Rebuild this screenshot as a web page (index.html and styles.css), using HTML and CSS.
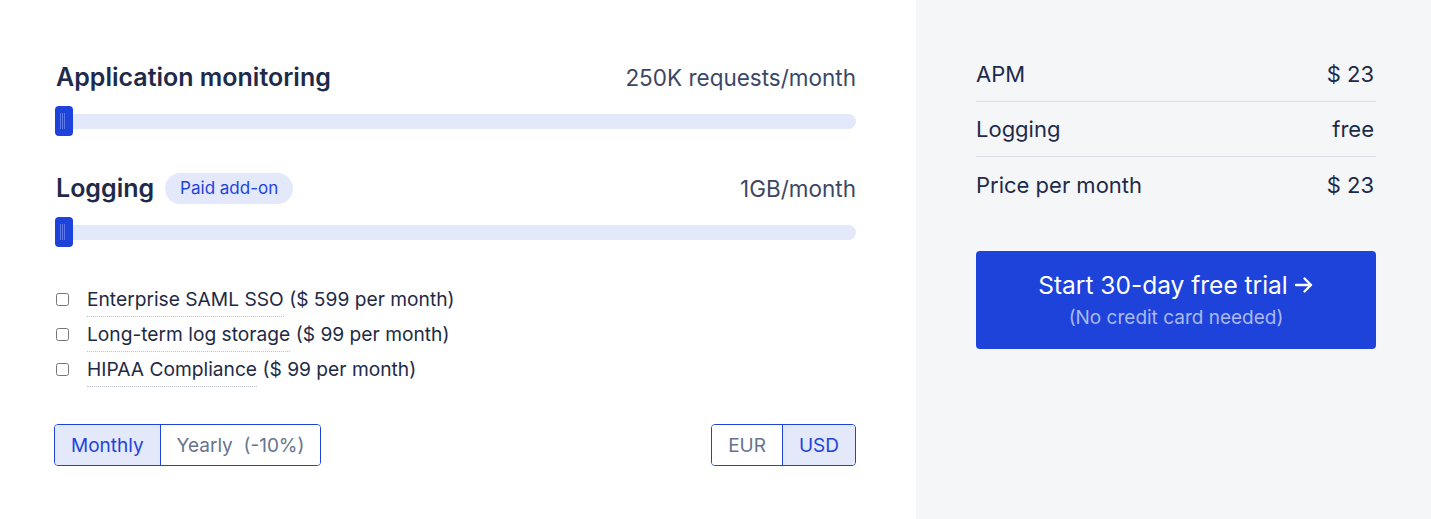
FILE: index.html
```html
<!DOCTYPE html>
<html lang="en">
  <head>
    <meta charset="UTF-8" />
    <meta name="viewport" content="width=device-width, initial-scale=1.0" />
    <title>Pricing calculator</title>
    <link rel="stylesheet" href="styles.css">
  </head>
  <body>
    <div class="config">
      <div class="metric-row">
        <h2 class="metric-title">Application monitoring</h2>
        <span class="metric-value">250K requests/month</span>
      </div>
      <div class="slider">
        <div class="slider-handle"></div>
      </div>

      <div class="metric-row">
        <h2 class="metric-title">
          Logging
          <span class="badge">Paid add-on</span>
        </h2>
        <span class="metric-value">1GB/month</span>
      </div>
      <div class="slider">
        <div class="slider-handle"></div>
      </div>

      <div class="addons">
        <label class="addon">
          <input type="checkbox" />
          <span class="addon-text"><span class="addon-name">Enterprise SAML SSO</span> ($ 599 per month)</span>
        </label>
        <label class="addon">
          <input type="checkbox" />
          <span class="addon-text"><span class="addon-name">Long-term log storage</span> ($ 99 per month)</span>
        </label>
        <label class="addon">
          <input type="checkbox" />
          <span class="addon-text"><span class="addon-name">HIPAA Compliance</span> ($ 99 per month)</span>
        </label>
      </div>

      <div class="toggles">
        <div class="toggle-group">
          <button class="toggle active">Monthly</button>
          <button class="toggle">Yearly&nbsp; (-10%)</button>
        </div>
        <div class="toggle-group">
          <button class="toggle">EUR</button>
          <button class="toggle active">USD</button>
        </div>
      </div>
    </div>

    <div class="summary">
      <div class="summary-row">
        <span>APM</span>
        <span>$ 23</span>
      </div>
      <div class="summary-row">
        <span>Logging</span>
        <span>free</span>
      </div>
      <div class="summary-row">
        <span>Price per month</span>
        <span>$ 23</span>
      </div>
      <a class="trial-button" href="#">
        <span class="trial-main">
          Start 30-day free trial
          <svg class="arrow" width="20" height="18" viewBox="0 0 20 18" fill="none" stroke="currentColor" stroke-width="2.4" stroke-linecap="round" stroke-linejoin="round">
            <path d="M2 9h15M10.5 2.5 17 9l-6.5 6.5" />
          </svg>
        </span>
        <span class="trial-sub">(No credit card needed)</span>
      </a>
    </div>
  </body>
</html>
```

FILE: styles.css
```css
* {
  margin: 0;
  padding: 0;
  box-sizing: border-box;
  font-family: "Inter", "Noto Sans", sans-serif;
}

body {
  display: flex;
  min-height: 519px;
  background-color: #ffffff;
  color: #1e2a4a;
}

.config {
  flex: 0 0 916px;
  padding: 61px 60px 0 56px;
}

.metric-row {
  display: flex;
  justify-content: space-between;
  align-items: center;
  height: 32px;
  margin-bottom: 21px;
}

.metric-title {
  display: flex;
  align-items: center;
  gap: 11px;
  font-size: 25px;
  font-weight: 600;
  color: #1e2a4a;
}

.metric-value {
  font-size: 22.5px;
  color: #3b4765;
}

.badge {
  display: inline-block;
  padding: 5px 15px;
  border-radius: 16px;
  background-color: #e3e8fb;
  color: #1d43db;
  font-size: 17px;
  font-weight: 400;
  line-height: 21px;
}

.slider {
  position: relative;
  height: 15px;
  border-radius: 8px;
  background-color: #e3e8fb;
  margin-bottom: 43px;
}

.slider-handle {
  position: absolute;
  left: -1px;
  top: -8px;
  width: 18px;
  height: 30px;
  border-radius: 4px;
  background-color: #1d43db;
}

.slider-handle::before {
  content: "";
  position: absolute;
  left: 5px;
  top: 7px;
  width: 1px;
  height: 16px;
  background-color: #5c78e8;
  box-shadow: 2px 0 0 #5c78e8, 4px 0 0 #5c78e8;
}

.addons {
  display: flex;
  flex-direction: column;
  gap: 5px;
  margin-top: 47px;
}

.addon {
  display: flex;
  align-items: flex-start;
  gap: 18px;
  font-size: 19.2px;
  line-height: 24px;
  color: #1e2a45;
  cursor: pointer;
}

.addon input {
  width: 13px;
  height: 13px;
  margin-top: 6px;
}

.addon-text {
  display: inline-block;
}

.addon-name {
  display: inline-block;
  padding-bottom: 5px;
  border-bottom: 1px dotted #b9c0cc;
}

.toggles {
  display: flex;
  justify-content: space-between;
  margin: 37px 0 0 -2px;
}

.toggle-group {
  display: flex;
  border: 1px solid #1d43db;
  border-radius: 4px;
  overflow: hidden;
}

.toggle {
  height: 40px;
  padding: 0 16px;
  border: none;
  background-color: #ffffff;
  color: #66748f;
  font-size: 19px;
  cursor: pointer;
}

.toggle + .toggle {
  border-left: 1px solid #1d43db;
}

.toggle.active {
  background-color: #e3e8fb;
  color: #1d43db;
}

.summary {
  flex: 1;
  background-color: #f5f6f8;
  padding: 47px 55px 0 60px;
}

.summary-row {
  display: flex;
  justify-content: space-between;
  align-items: center;
  height: 55px;
  padding-right: 2px;
  border-bottom: 1px solid #d9dde6;
  font-size: 22px;
  color: #1e2a4a;
}

.summary-row:nth-child(3) {
  border-bottom: none;
}

.trial-button {
  display: flex;
  flex-direction: column;
  align-items: center;
  margin-top: 39px;
  padding: 18px 0 19px;
  border-radius: 4px;
  background-color: #1d43db;
  color: #ffffff;
  text-decoration: none;
}

.trial-main {
  display: flex;
  align-items: center;
  gap: 6px;
  font-size: 24.5px;
  line-height: 32px;
}

.trial-sub {
  margin-top: 5px;
  font-size: 19px;
  line-height: 24px;
  color: #aab9f1;
}
```
